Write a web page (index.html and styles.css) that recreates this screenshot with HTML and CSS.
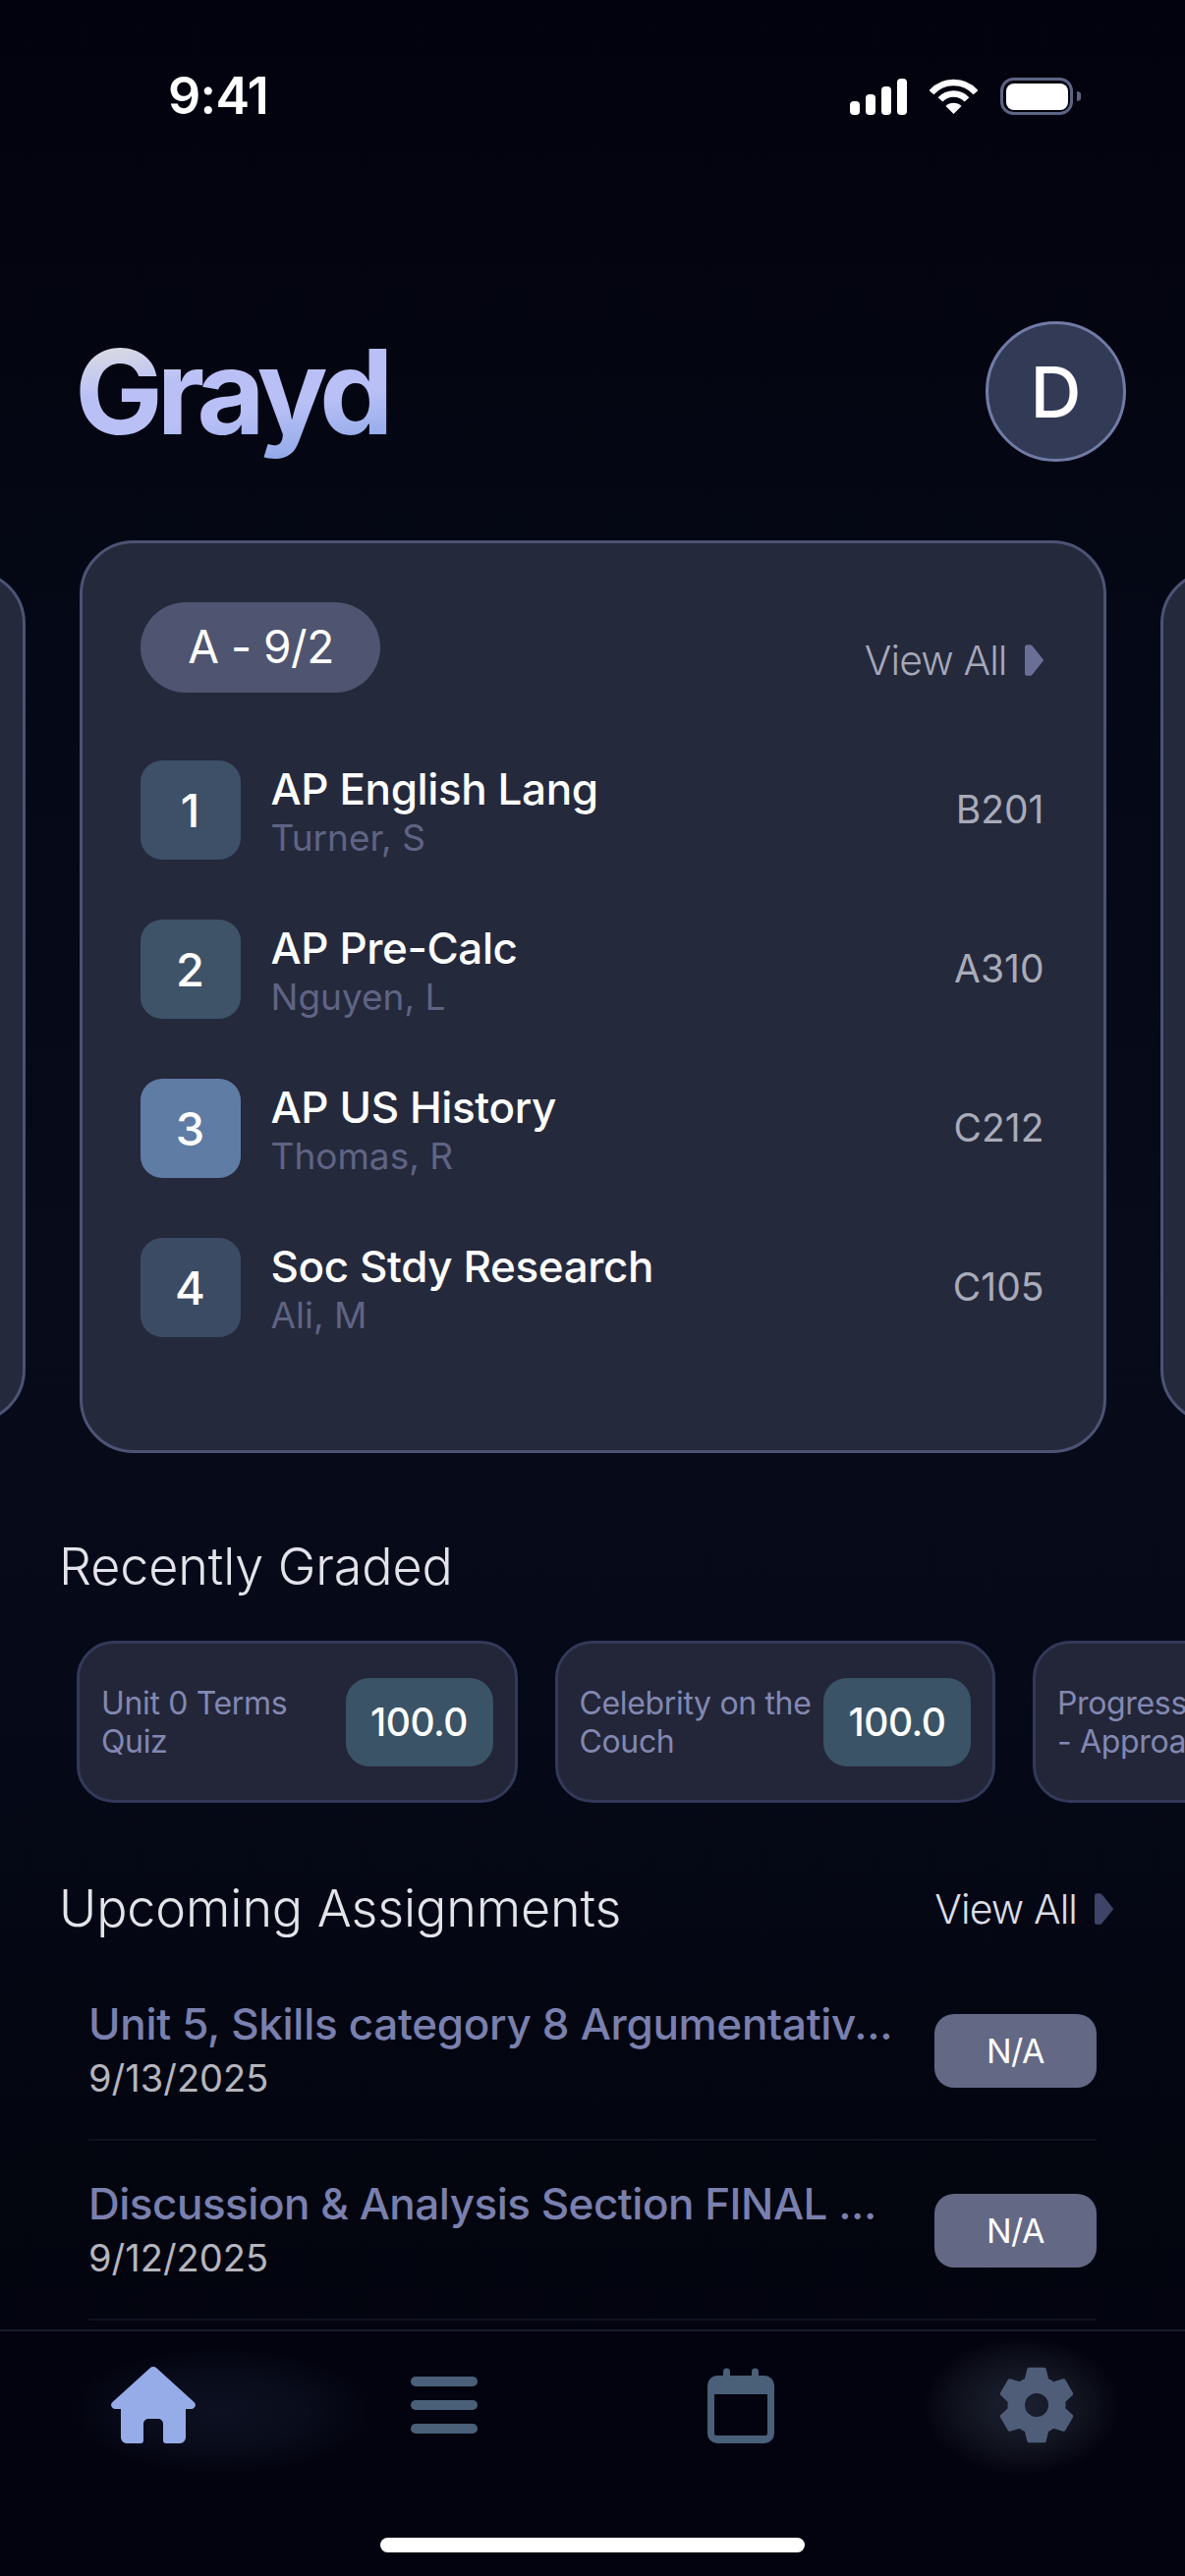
FILE: index.html
```html
<!DOCTYPE html>
<html lang="en">
<head>
<meta charset="utf-8">
<title>Grayd</title>
<link rel="stylesheet" href="styles.css">
</head>
<body>
<div class="phone">
  <div class="status">
    <span class="time">9:41</span>
    <div class="status-icons">
      <svg class="sig" viewBox="0 0 58 37"><rect x="0" y="23" width="10" height="14" rx="4"/><rect x="16" y="16" width="10" height="21" rx="4"/><rect x="32" y="8" width="10" height="29" rx="4"/><rect x="48" y="0" width="10" height="37" rx="4"/></svg>
      <svg class="wifi" viewBox="0 0 49 36"><path class="arc" d="M2 14.200A30 30 0 0 1 47 14.200"/><path class="arc" d="M11 21.350A18.500 18.500 0 0 1 38 21.350"/><path class="wedge" d="M24.500 36L16.500 28A11.300 11.300 0 0 1 32.500 28Z"/></svg>
      <svg class="batt" viewBox="0 0 82 38"><rect class="batt-frame" x="1.500" y="1.500" width="71" height="35" rx="12"/><rect class="batt-fill" x="6" y="6" width="63" height="27" rx="8"/><path class="batt-nub" d="M78 14a5 5 0 0 1 0 10Z"/></svg>
    </div>
  </div>

  <header class="top">
    <h1 class="logo">Grayd</h1>
    <div class="avatar">D</div>
  </header>

  <section class="carousel">
    <div class="card side"></div>
    <div class="card">
      <div class="card-head">
        <span class="pill">A - 9/2</span>
        <a class="view-all muted">View All
          <svg class="arrow" viewBox="0 0 18 30"><path d="M2.500 0H5Q6.500 0 7.500 1.500L17.700 14.300Q18.200 15 17.700 15.700L7.500 28.500Q6.500 30 5 30H2.500Q0 30 0 27.500V2.500Q0 0 2.500 0Z"/></svg>
        </a>
      </div>
      <div class="periods">
        <div class="period"><span class="num n1">1</span><div class="info"><div class="name">AP English Lang</div><div class="teacher">Turner, S</div></div><span class="room">B201</span></div>
        <div class="period"><span class="num n2">2</span><div class="info"><div class="name">AP Pre-Calc</div><div class="teacher">Nguyen, L</div></div><span class="room">A310</span></div>
        <div class="period"><span class="num n3">3</span><div class="info"><div class="name">AP US History</div><div class="teacher">Thomas, R</div></div><span class="room">C212</span></div>
        <div class="period"><span class="num n4">4</span><div class="info"><div class="name">Soc Stdy Research</div><div class="teacher">Ali, M</div></div><span class="room">C105</span></div>
      </div>
    </div>
    <div class="card side"></div>
  </section>

  <h2 class="section-title recent-title">Recently Graded</h2>
  <div class="graded">
    <div class="grade-card"><div class="grade-name">Unit 0 Terms Quiz</div><div class="score">100.0</div></div>
    <div class="grade-card"><div class="grade-name">Celebrity on the Couch</div><div class="score">100.0</div></div>
    <div class="grade-card"><div class="grade-name nowrap">Progress Check<br>- Approaches</div><div class="score">100.0</div></div>
  </div>

  <div class="up-head">
    <h2 class="section-title">Upcoming Assignments</h2>
    <a class="view-all light">View All
      <svg class="arrow dark" viewBox="0 0 18 30"><path d="M2.500 0H5Q6.500 0 7.500 1.500L17.700 14.300Q18.200 15 17.700 15.700L7.500 28.500Q6.500 30 5 30H2.500Q0 30 0 27.500V2.500Q0 0 2.500 0Z"/></svg>
    </a>
  </div>
  <div class="assignments">
    <div class="assignment"><div class="a-info"><div class="a-title">Unit 5, Skills category 8 Argumentativ...</div><div class="a-date">9/13/2025</div></div><span class="na">N/A</span></div>
    <div class="assignment"><div class="a-info"><div class="a-title tight">Discussion &amp; Analysis Section FINAL ...</div><div class="a-date">9/12/2025</div></div><span class="na">N/A</span></div>
  </div>

  <nav class="nav">
    <div class="tabs">
      <div class="tab home-tab">
        <svg class="ico-home" viewBox="0 0 88 78"><path d="M40.500 1.500a5 5 0 0 1 7 0L85.500 36a4 4 0 0 1-2.500 7H77V72a6 6 0 0 1-6 6H57a3 3 0 0 1-3-3V58a5 5 0 0 0-5-5H39a5 5 0 0 0-5 5V75a3 3 0 0 1-3 3H17a6 6 0 0 1-6-6V43H5a4 4 0 0 1-2.500-7Z"/></svg>
      </div>
      <div class="tab">
        <svg class="ico ico-menu" viewBox="0 0 68 58"><rect y="0" width="68" height="10" rx="5"/><rect y="24" width="68" height="10" rx="5"/><rect y="48" width="68" height="10" rx="5"/></svg>
      </div>
      <div class="tab">
        <svg class="ico ico-cal" viewBox="0 0 68 78"><path fill-rule="evenodd" d="M16 5a3.500 3.500 0 0 1 7 0V9H45V5a3.500 3.500 0 0 1 7 0V9H58a10 10 0 0 1 10 10V68a10 10 0 0 1-10 10H10A10 10 0 0 1 0 68V19A10 10 0 0 1 10 9H16ZM7 28V68a2 2 0 0 0 2 2H59a2 2 0 0 0 2-2V28Z"/></svg>
      </div>
      <div class="tab gear-tab">
        <svg class="ico ico-gear" viewBox="-37 -39 74 78"><path fill-rule="evenodd" d="M-10.300 -25.500L-7.700 -36.200L7.700 -36.200L10.300 -25.500A27.500 27.500 0 0 1 16.930 -21.670L27.500 -24.770L35.200 -11.430L27.230 -3.830A27.500 27.500 0 0 1 27.230 3.830L35.200 11.430L27.500 24.770L16.930 21.670A27.500 27.500 0 0 1 10.300 25.500L7.700 36.200L-7.700 36.200L-10.300 25.500A27.500 27.500 0 0 1 -16.930 21.670L-27.500 24.770L-35.200 11.430L-27.230 3.830A27.500 27.500 0 0 1 -27.230 -3.830L-35.200 -11.430L-27.500 -24.770L-16.930 -21.670A27.500 27.500 0 0 1 -10.300 -25.500ZM14 0A14 14 0 1 0 -14 0A14 14 0 1 0 14 0Z"/></svg>
      </div>
    </div>
    <div class="home-bar"></div>
  </nav>
</div>
</body>
</html>
```

FILE: styles.css
```css
* { box-sizing: border-box; margin: 0; padding: 0; }
html, body { width: 1206px; height: 2622px; background: #03030f; }
body { font-family: Inter, "Noto Sans", "Liberation Sans", sans-serif; color: #fff; overflow: hidden; }

.phone {
  width: 1206px; height: 2622px; overflow: hidden;
  display: flex; flex-direction: column;
  background: linear-gradient(180deg, #02020f 0%, #03040f 8%, #050816 25%, #070b1a 50%, #060918 65%, #03050f 85%, #02020e 100%);
}

/* status bar */
.status { height: 196px; flex: none; display: flex; align-items: center; justify-content: space-between; padding: 0 106px 0 171px; }
.time { font-size: 52px; font-weight: 600; letter-spacing: -0.7px; line-height: 1; }
.status-icons { display: flex; align-items: center; gap: 23px; }
.sig { width: 58px; height: 37px; fill: #fff; }
.wifi { width: 49px; height: 36px; }
.wifi .arc { fill: none; stroke: #fff; stroke-width: 6.5; }
.wifi .wedge { fill: #fff; }
.batt { width: 82px; height: 38px; }
.batt-frame { fill: none; stroke: #5d6384; stroke-width: 3; }
.batt-fill { fill: #fff; }
.batt-nub { fill: #5d6384; }

/* header */
.top { flex: none; height: 143px; margin-top: 131px; display: flex; align-items: center; justify-content: space-between; padding: 0 60px 0 76px; }
.logo {
  font-size: 120px; font-weight: 700; letter-spacing: -6.5px; line-height: 143px;
  background: linear-gradient(170deg, #dcdde0 0%, #dadbe2 16%, #bac0f6 40%, #b9c0f6 62%, #8ea8e8 92%);
  -webkit-background-clip: text; background-clip: text; color: transparent;
}
.avatar {
  width: 143px; height: 143px; border-radius: 50%;
  background: #333a56; border: 3px solid #707ba6;
  display: flex; align-items: center; justify-content: center;
  font-size: 72px; font-weight: 500;
}

/* carousel */
.carousel { flex: none; margin-top: 80px; height: 929px; display: flex; justify-content: center; align-items: center; gap: 55px; }
.card {
  flex: none; width: 1045px; height: 929px; border-radius: 55px;
  background: #25293c; border: 3px solid #4c5374;
  padding: 60px 61px 0 59px;
}
.card.side { height: 869px; }
.card-head { display: flex; justify-content: space-between; align-items: flex-start; height: 161px; }
.pill { width: 244px; height: 92px; border-radius: 46px; background: #4f5570; display: flex; align-items: center; justify-content: center; font-size: 46px; letter-spacing: -0.5px; font-weight: 400; padding: 0 0 2px 2px; }
.view-all { display: flex; align-items: center; gap: 18px; font-size: 41px; font-weight: 300; line-height: 50px; letter-spacing: -0.9px; }
.muted { color: #a6a8ba; margin-top: 34px; }
.light { color: #dcdee6; }
.arrow { width: 19px; height: 32px; fill: #6a6f96; }
.arrow.dark { fill: #3e4468; }
.periods { display: flex; flex-direction: column; gap: 61px; }
.period { display: flex; align-items: center; height: 101px; }
.num { flex: none; width: 102px; height: 101px; border-radius: 22px; display: flex; align-items: center; justify-content: center; font-size: 47px; font-weight: 500; }
.n1 { background: #3e4f68; }
.n2 { background: #3e5268; }
.n3 { background: #5f7ca5; }
.n4 { background: #3c4b64; }
.info { flex: 1; margin-left: 31px; padding-top: 2px; }
.name { font-size: 44px; font-weight: 500; line-height: 54px; letter-spacing: -0.4px; }
.teacher { font-size: 37px; font-weight: 400; line-height: 46px; color: #5f6484; }
.room { font-size: 39px; font-weight: 400; color: #a9abb9; margin: 0 -1px 2px 0; }

/* sections */
.section-title { font-size: 52px; font-weight: 300; line-height: 62px; color: #e3e4ea; letter-spacing: -0.1px; }
.recent-title { flex: none; margin-top: 85px; padding-left: 60px; }
.graded { flex: none; margin-top: 44px; padding-left: 78px; display: flex; gap: 38px; }
.grade-card {
  flex: none; width: 448.5px; height: 165px; border-radius: 38px;
  background: #232638; border: 3px solid #33395a;
  display: flex; align-items: center; justify-content: space-between;
  padding: 0 22px 0 22px;
}
.grade-name { font-size: 32px; line-height: 39px; color: #8288b2; width: 240px; flex: none; letter-spacing: -0.35px; }
.nowrap { white-space: nowrap; }
.score { flex: none; width: 150px; height: 90px; border-radius: 24px; background: #3a5366; display: flex; align-items: center; justify-content: center; font-size: 39px; font-weight: 500; letter-spacing: -0.5px; }

.up-head { flex: none; margin-top: 77px; padding: 0 73px 0 60px; display: flex; align-items: center; justify-content: space-between; }
.assignments { flex: none; margin-top: 22px; padding: 0 90px; }
.assignment { height: 183px; border-bottom: 2px solid #0f1220; display: flex; align-items: center; justify-content: space-between; padding-top: 2px; }
.a-title { font-size: 44px; font-weight: 500; line-height: 54px; color: #7a80ae; white-space: nowrap; letter-spacing: -0.3px; }
.a-title.tight { letter-spacing: -0.5px; }
.a-date { font-size: 38px; line-height: 56px; color: #b5b5bd; }
.na { flex: none; width: 165px; height: 75px; border-radius: 20px; background: #636885; display: flex; align-items: center; justify-content: center; font-size: 34px; letter-spacing: -0.5px; }

/* nav */
.nav { flex: none; margin-top: auto; height: 251px; border-top: 2px solid #161b2c; padding-top: 36px; background: #03030f; display: flex; flex-direction: column; align-items: center; }
.tabs { width: 100%; display: grid; grid-template-columns: repeat(4, 301.5px); height: 78px; }
.tab { position: relative; display: flex; align-items: center; justify-content: center; }
.tab svg { position: relative; }
.home-tab::before {
  content: ""; position: absolute; left: 70px; top: -20px; width: 310px; height: 130px;
  background: radial-gradient(closest-side, #0c1020 0%, #090c1b 55%, rgba(3,3,15,0) 100%);
}
.gear-tab::before {
  content: ""; position: absolute; left: 35px; top: -30px; width: 200px; height: 140px;
  background: radial-gradient(closest-side, #1d2032 0%, #11141f 60%, rgba(3,3,15,0) 100%);
}
.ico-home { width: 88px; height: 78px; fill: #96ace8; margin-left: 10px; }
.ico { fill: #4a5f78; }
.ico-menu { width: 68px; height: 58px; }
.ico-cal { width: 68px; height: 78px; }
.ico-gear { width: 74px; height: 78px; fill: #4f5d78; stroke: #4f5d78; stroke-width: 4; stroke-linejoin: round; }
.home-bar { margin-top: 96px; width: 432px; height: 15px; border-radius: 8px; background: #fff; }
```
